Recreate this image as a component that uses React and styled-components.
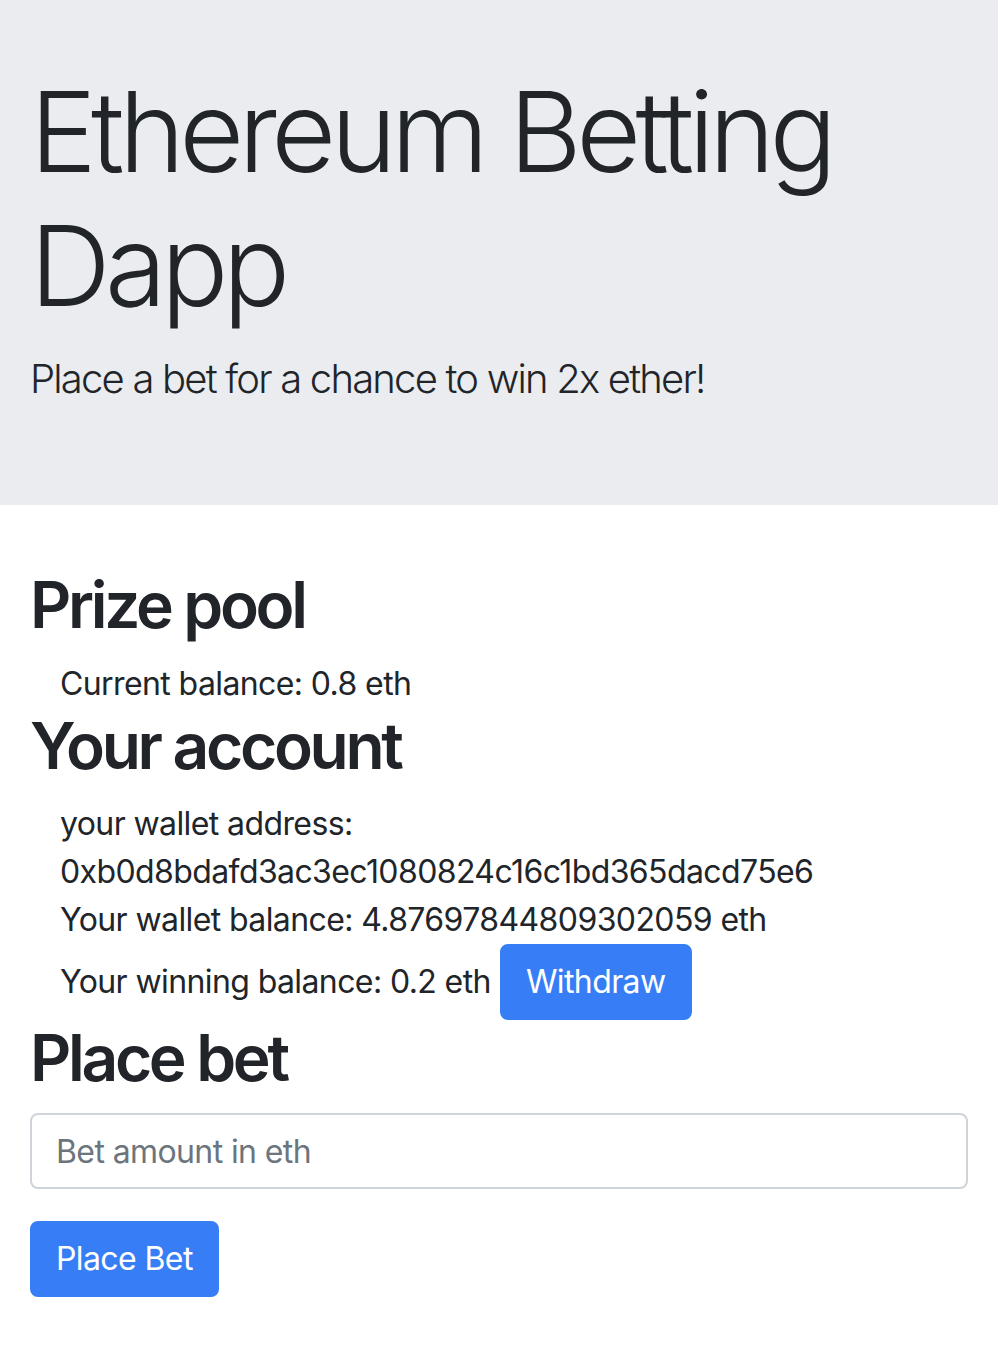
import React from 'react'
import styled, { createGlobalStyle } from 'styled-components'

const GlobalStyle = createGlobalStyle`
  * { box-sizing: border-box; }
  body {
    margin: 0;
    font-family: Inter, "Noto Sans", "Liberation Sans", sans-serif;
    font-size: 32px;
    line-height: 1.5;
    color: #212529;
    background: #fff;
  }
`

const Jumbotron = styled.header`
  background: #eaecef;
  padding: 64px 0;
  margin-bottom: 62px;
`

const Container = styled.div`
  padding: 0 30px;
`

const Display = styled.h1`
  margin: 0 0 16px;
  font-size: 112px;
  font-weight: 300;
  line-height: 1.2;
  letter-spacing: -5.6px;
`

const Lead = styled.p`
  margin: 0 0 32px;
  font-size: 40px;
  font-weight: 300;
  letter-spacing: -1.8px;
`

const SectionTitle = styled.h2`
  margin: 0 0 16px;
  font-size: 64px;
  font-weight: 600;
  line-height: 1.2;
  letter-spacing: -3.3px;
`

const Detail = styled.div`
  padding-left: 30px;
  letter-spacing: -0.6px;
`

const Line = styled.div``

const Button = styled.button`
  display: inline-block;
  font-family: inherit;
  font-size: 32px;
  font-weight: 400;
  line-height: 1.5;
  letter-spacing: -0.6px;
  color: #fff;
  background: #377ef6;
  border: 2px solid #377ef6;
  border-radius: 8px;
  padding: 12px 24px;
  margin-left: ${({ inline }) => (inline ? '9px' : '0')};
  cursor: pointer;
`

const FormGroup = styled.div`
  margin-bottom: 32px;
`

const Input = styled.input`
  display: block;
  width: 100%;
  height: 76px;
  padding: 12px 24px;
  font-family: inherit;
  font-size: 32px;
  letter-spacing: -0.6px;
  color: #495057;
  border: 2px solid #ced4da;
  border-radius: 8px;
  background: #fff;
  &::placeholder {
    color: #6c757d;
  }
`

const App = () => (
  <>
    <GlobalStyle />
    <Jumbotron>
      <Container>
        <Display>Ethereum Betting Dapp</Display>
        <Lead>Place a bet for a chance to win 2x ether!</Lead>
      </Container>
    </Jumbotron>
    <Container>
      <SectionTitle>Prize pool</SectionTitle>
      <Detail>Current balance: 0.8 eth</Detail>
      <SectionTitle>Your account</SectionTitle>
      <Detail>
        <Line>your wallet address:</Line>
        <Line>0xb0d8bdafd3ac3ec1080824c16c1bd365dacd75e6</Line>
        <Line>Your wallet balance: 4.87697844809302059 eth</Line>
        <Line>
          Your winning balance: 0.2 eth
          <Button inline>Withdraw</Button>
        </Line>
      </Detail>
      <SectionTitle>Place bet</SectionTitle>
      <FormGroup>
        <Input type="text" placeholder="Bet amount in eth" />
      </FormGroup>
      <Button>Place Bet</Button>
    </Container>
  </>
)

export default App
